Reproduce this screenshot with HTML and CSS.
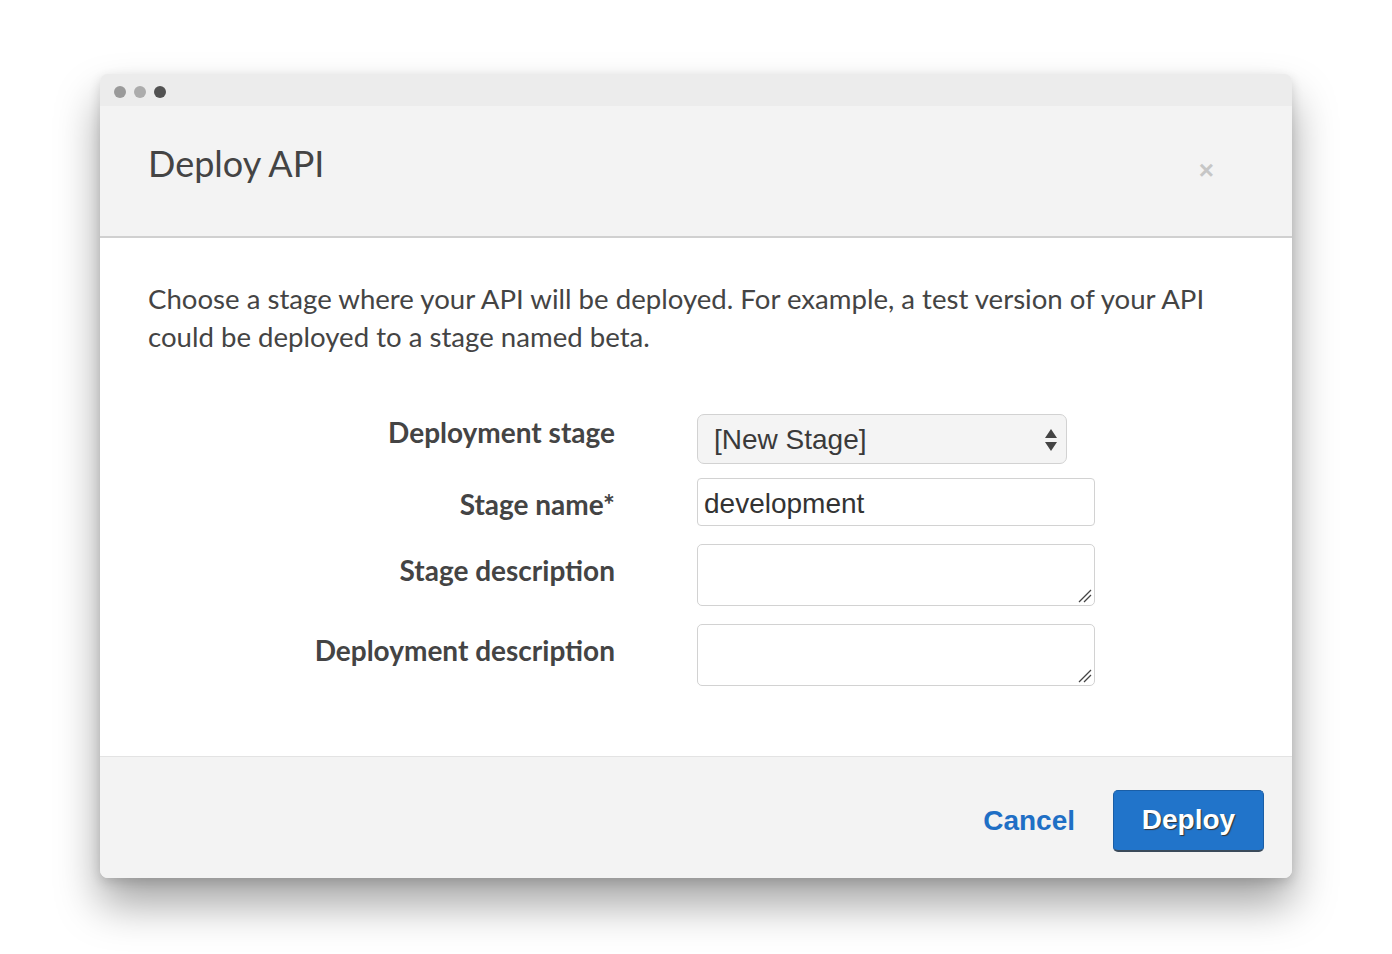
FILE: index.html
```html
<!DOCTYPE html>
<html>
<head>
<meta charset="utf-8">
<link rel="stylesheet" href="styles.css">
</head>
<body>
<div class="page">
  <div class="window">
    <div class="titlebar">
      <span class="dot dot1"></span>
      <span class="dot dot2"></span>
      <span class="dot dot3"></span>
    </div>
    <div class="header">
      <h1 class="title">Deploy API</h1>
      <span class="close">×</span>
    </div>
    <div class="body">
      <p class="intro">Choose a stage where your API will be deployed. For example, a test version of your API could be deployed to a stage named beta.</p>
      <div class="form">
        <div class="row row-select">
          <label class="label">Deployment stage</label>
          <div class="select">
            <span class="select-text">[New Stage]</span>
            <svg class="arrows" width="12" height="26" viewBox="0 0 12 26"><path d="M6 2 L12 11 L0 11 Z M0 15 L12 15 L6 24 Z" fill="#444"/></svg>
          </div>
        </div>
        <div class="row row-input">
          <label class="label">Stage name*</label>
          <div class="input">development</div>
        </div>
        <div class="row row-text">
          <label class="label">Stage description</label>
          <div class="textarea"><svg class="grip" width="14" height="14" viewBox="0 0 14 14"><path d="M1 13 L13 1 M6 13 L13 6" stroke="#444" stroke-width="1.3"/></svg></div>
        </div>
        <div class="row row-text">
          <label class="label">Deployment description</label>
          <div class="textarea"><svg class="grip" width="14" height="14" viewBox="0 0 14 14"><path d="M1 13 L13 1 M6 13 L13 6" stroke="#444" stroke-width="1.3"/></svg></div>
        </div>
      </div>
    </div>
    <div class="footer">
      <span class="cancel">Cancel</span>
      <span class="deploy">Deploy</span>
    </div>
  </div>
</div>
</body>
</html>
```
FILE: styles.css
```css
html, body {
  margin: 0;
  padding: 0;
  background: #ffffff;
}
.page {
  padding: 74px 100px 76px 100px;
  width: 1192px;
}
.window {
  width: 1192px;
  height: 804px;
  border-radius: 8px;
  background: #f3f3f3;
  box-shadow: 0 26px 44px rgba(0,0,0,0.36), 0 4px 12px rgba(0,0,0,0.14);
  display: flex;
  flex-direction: column;
  overflow: hidden;
}
.titlebar {
  height: 32px;
  background: #ececec;
  display: flex;
  align-items: center;
  gap: 8px;
  padding-left: 14px;
  padding-top: 3px;
  box-sizing: border-box;
}
.dot {
  width: 12px;
  height: 12px;
  border-radius: 50%;
  display: block;
}
.dot1 { background: #9a9a9a; }
.dot2 { background: #acacac; }
.dot3 { background: #525252; }
.header {
  height: 132px;
  box-sizing: border-box;
  background: #f3f3f3;
  border-bottom: 2px solid #d0d0d0;
  display: flex;
  align-items: flex-start;
  justify-content: space-between;
  padding: 33px 78px 0 48px;
}
.title {
  margin: 0;
  font-family: Lato, "Liberation Sans", sans-serif;
  font-weight: 400;
  font-size: 36px;
  line-height: 48px;
  color: #444;
}
.close {
  font-family: "Liberation Sans", sans-serif;
  font-weight: bold;
  font-size: 26px;
  color: #c6c6c6;
  margin-top: 16px;
}
.body {
  background: #ffffff;
  height: 519px;
  box-sizing: border-box;
  padding: 42px 48px 0 48px;
  border-bottom: 1px solid #e3e3e3;
}
.intro {
  margin: 0;
  font-family: Lato, "Liberation Sans", sans-serif;
  font-size: 27.6px;
  line-height: 38px;
  color: #444;
  width: 1090px;
}
.form {
  margin-top: 57px;
  display: flex;
  flex-direction: column;
}
.row {
  display: grid;
  grid-template-columns: 467px 398px;
  column-gap: 82px;
  align-items: start;
}
.label {
  text-align: right;
  font-family: Lato, "Liberation Sans", sans-serif;
  font-weight: 700;
  font-size: 28px;
  line-height: 38px;
  color: #444;
}
.row-select { height: 64px; }
.row-input { height: 66px; }
.row-input .label { margin-top: 8px; }
.row-text { height: 80px; }
.row-text .label { margin-top: 8px; }
.select {
  width: 370px;
  height: 50px;
  box-sizing: border-box;
  border: 1px solid #d2d2d2;
  border-radius: 7px;
  background: #f4f4f4;
  display: flex;
  align-items: center;
  justify-content: space-between;
  padding: 2px 9px 0 16px;
  margin-top: 1px;
}
.select-text, .input {
  font-family: "Liberation Sans", Arial, sans-serif;
  font-size: 28px;
  color: #444;
}
.select-text { color: #3a3a3a; }
.input {
  width: 398px;
  height: 48px;
  box-sizing: border-box;
  border: 1px solid #d2d2d2;
  border-radius: 4px;
  background: #fff;
  display: flex;
  align-items: center;
  padding: 3px 7px 0 6px;
  margin-top: 1px;
  color: #333;
}
.textarea {
  width: 398px;
  height: 62px;
  box-sizing: border-box;
  border: 1px solid #d2d2d2;
  border-radius: 5px;
  background: #fff;
  position: relative;
  margin-top: 1px;
}
.grip {
  position: absolute;
  right: 2px;
  bottom: 2px;
}
.footer {
  flex: 1;
  background: #f3f3f3;
  display: flex;
  align-items: center;
  justify-content: flex-end;
  padding: 0 28px 0 0;
  gap: 38px;
}
.cancel {
  font-family: "Liberation Sans", Arial, sans-serif;
  font-weight: bold;
  font-size: 28px;
  color: #1f6fc5;
  margin-top: 6px;
}
.deploy {
  font-family: "Liberation Sans", Arial, sans-serif;
  font-weight: bold;
  font-size: 28px;
  color: #fff;
  background: #2174ca;
  border: 1px solid #1a5ea6;
  border-bottom: 2px solid #3a4a5a;
  border-radius: 5px;
  width: 151px;
  height: 62px;
  box-sizing: border-box;
  display: flex;
  align-items: center;
  justify-content: center;
  text-shadow: 1px 1px 1px #333;
  margin-top: 6px;
}
```
